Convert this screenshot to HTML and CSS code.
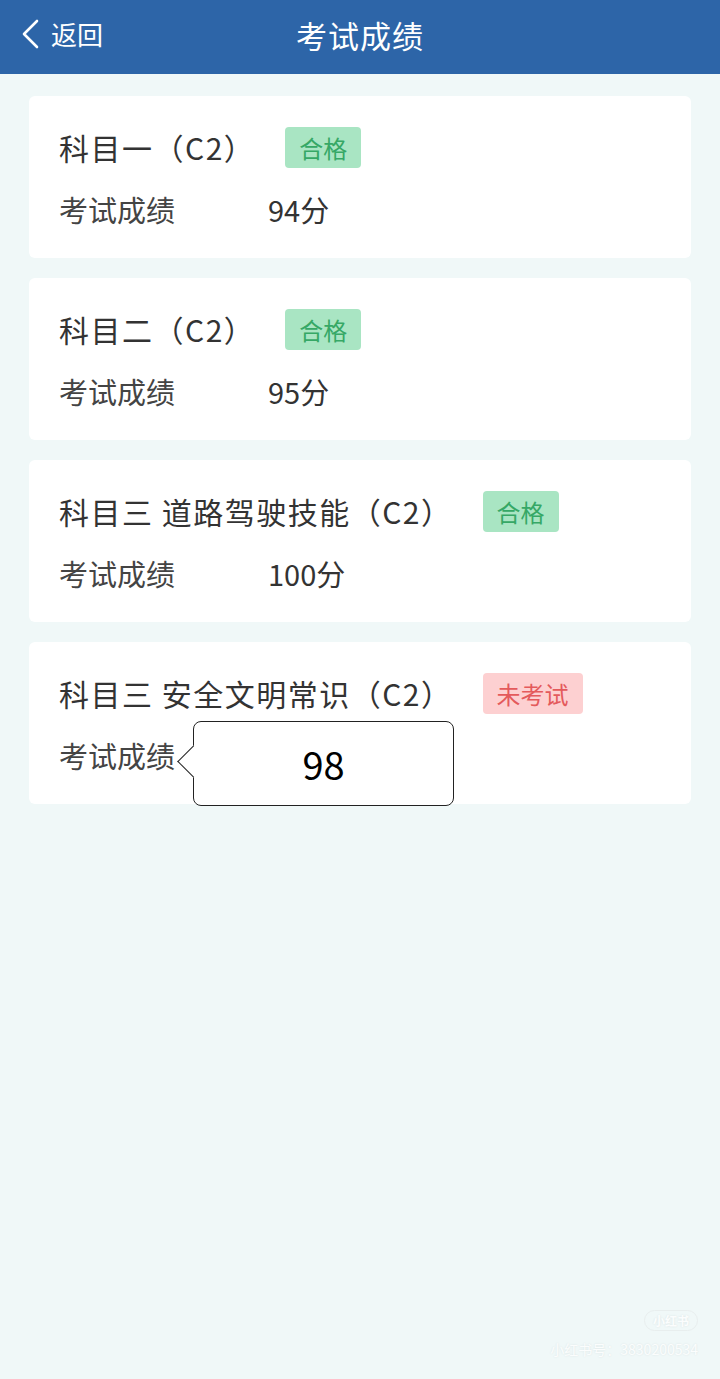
FILE: index.html
```html
<!DOCTYPE html>
<html lang="zh-CN">
<head>
    <meta charset="UTF-8">
    <meta name="viewport" content="width=device-width, initial-scale=1.0">
    <title>考试成绩</title>
    <link rel="stylesheet" href="styles.css">
</head>
<body>

    <div class="header">
        <div class="back">
            <svg class="back-icon" width="20" height="32" viewBox="0 0 20 32">
                <polyline points="16,3 3,16 16,29" fill="none" stroke="#fff" stroke-width="2.6" stroke-linejoin="round" stroke-linecap="round"/>
            </svg>
            <span>返回</span>
        </div>
        <h1>考试成绩</h1>
    </div>

    <div class="list">
        <div class="card">
            <div class="row-title">
                <span class="subject">科目一（C2）</span>
                <span class="tag pass">合格</span>
            </div>
            <div class="row-score">
                <span class="label">考试成绩</span>
                <span class="value">94分</span>
            </div>
        </div>

        <div class="card">
            <div class="row-title">
                <span class="subject">科目二（C2）</span>
                <span class="tag pass">合格</span>
            </div>
            <div class="row-score">
                <span class="label">考试成绩</span>
                <span class="value">95分</span>
            </div>
        </div>

        <div class="card">
            <div class="row-title">
                <span class="subject">科目三 道路驾驶技能（C2）</span>
                <span class="tag pass">合格</span>
            </div>
            <div class="row-score">
                <span class="label">考试成绩</span>
                <span class="value">100分</span>
            </div>
        </div>

        <div class="card">
            <div class="row-title">
                <span class="subject">科目三 安全文明常识（C2）</span>
                <span class="tag fail">未考试</span>
            </div>
            <div class="row-score">
                <span class="label">考试成绩</span>
                <span class="value"></span>
                <!-- 输入提示气泡 -->
                <div class="bubble">98</div>
            </div>
        </div>
    </div>

    <div class="watermark">
        <span class="wm-logo">小红书</span>
        <span class="wm-id">小红书号：3830200534</span>
    </div>

</body>
</html>
```

FILE: styles.css
```css
body {
    margin: 0;
    padding: 0;
    background-color: #f0f8f8;
    font-family: "Noto Sans CJK SC", "Noto Sans", sans-serif;
    min-height: 1379px;
    position: relative;
}
.header {
    height: 74px;
    background-color: #2d65a8;
    color: #fff;
    display: flex;
    align-items: center;
    justify-content: center;
    position: relative;
}
.header h1 {
    margin: 0;
    font-size: 31px;
    font-weight: 400;
    line-height: 1;
    margin-top: -6px;
    letter-spacing: 1px;
}
.back {
    position: absolute;
    left: 21px;
    top: 18px;
    display: flex;
    align-items: center;
    gap: 10px;
    font-size: 26px;
    line-height: 32px;
}
.back-icon {
    display: block;
}
.list {
    padding: 22px 29px 0;
    display: flex;
    flex-direction: column;
    gap: 20px;
}
.card {
    background-color: #fff;
    border-radius: 6px;
    padding: 31px 30px 29px;
}
.row-title {
    display: flex;
    align-items: center;
    height: 41px;
}
.subject {
    font-size: 30px;
    color: #333;
    line-height: 41px;
    letter-spacing: 1.5px;
}
.tag {
    margin-left: 30px;
    height: 41px;
    line-height: 41px;
    padding: 0 14px;
    border-radius: 4px;
    font-size: 24px;
}
.tag.pass {
    background-color: #a9e5c3;
    color: #36a866;
}
.tag.fail {
    background-color: #fdd0d1;
    color: #e45a5c;
}
.row-score {
    display: flex;
    align-items: center;
    height: 40px;
    margin-top: 21px;
    position: relative;
}
.label {
    width: 209px;
    font-size: 29px;
    color: #444;
}
.value {
    font-size: 29px;
    color: #333;
}
.bubble {
    position: absolute;
    left: 134px;
    top: -14px;
    width: 259px;
    height: 83px;
    border: 1.5px solid #222;
    border-radius: 8px;
    background-color: #fff;
    display: flex;
    align-items: center;
    justify-content: center;
    font-size: 38px;
    color: #000;
}
.bubble::before {
    content: "";
    position: absolute;
    left: -12px;
    top: 28px;
    width: 22px;
    height: 22px;
    background-color: #fff;
    border-left: 1.5px solid #222;
    border-bottom: 1.5px solid #222;
    transform: rotate(45deg);
}
.watermark {
    position: absolute;
    right: 22px;
    bottom: 20px;
    display: flex;
    flex-direction: column;
    align-items: flex-end;
    gap: 8px;
    color: #fbfdfd;
    text-shadow: 0 0 2px #d8e2e2;
    font-size: 14px;
}
.wm-logo {
    border: 1px solid #e8eeee;
    border-radius: 12px;
    padding: 1px 8px;
    font-size: 12px;
    font-weight: bold;
}
```
